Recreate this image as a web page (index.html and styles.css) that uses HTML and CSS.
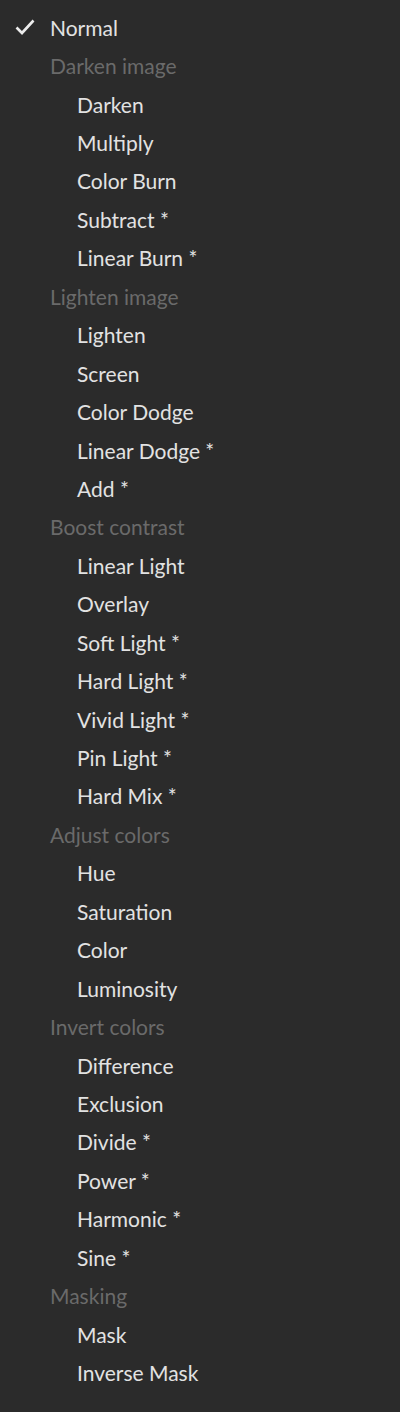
FILE: index.html
```html
<!DOCTYPE html>
<html>
<head>
<meta charset="utf-8">
<link rel="stylesheet" href="styles.css">
</head>
<body>
<ul class="menu">
  <li class="row selected"><svg class="check" viewBox="0 0 20 16" width="20" height="16"><path d="M1.5 8.5 L7 14 L18.5 1.5" fill="none" stroke="#ececec" stroke-width="2.6" stroke-linecap="butt" stroke-linejoin="miter"/></svg><span>Normal</span></li>
  <li class="row group">Darken image</li>
  <li class="row item">Darken</li>
  <li class="row item">Multiply</li>
  <li class="row item">Color Burn</li>
  <li class="row item">Subtract *</li>
  <li class="row item">Linear Burn *</li>
  <li class="row group">Lighten image</li>
  <li class="row item">Lighten</li>
  <li class="row item">Screen</li>
  <li class="row item">Color Dodge</li>
  <li class="row item">Linear Dodge *</li>
  <li class="row item">Add *</li>
  <li class="row group">Boost contrast</li>
  <li class="row item">Linear Light</li>
  <li class="row item">Overlay</li>
  <li class="row item">Soft Light *</li>
  <li class="row item">Hard Light *</li>
  <li class="row item">Vivid Light *</li>
  <li class="row item">Pin Light *</li>
  <li class="row item">Hard Mix *</li>
  <li class="row group">Adjust colors</li>
  <li class="row item">Hue</li>
  <li class="row item">Saturation</li>
  <li class="row item">Color</li>
  <li class="row item">Luminosity</li>
  <li class="row group">Invert colors</li>
  <li class="row item">Difference</li>
  <li class="row item">Exclusion</li>
  <li class="row item">Divide *</li>
  <li class="row item">Power *</li>
  <li class="row item">Harmonic *</li>
  <li class="row item">Sine *</li>
  <li class="row group">Masking</li>
  <li class="row item">Mask</li>
  <li class="row item">Inverse Mask</li>
</ul>
</body>
</html>
```
FILE: styles.css
```css
html, body {
  margin: 0;
  padding: 0;
  background: #2b2b2b;
}
body {
  font-family: "Lato", "Noto Sans", sans-serif;
  font-size: 21px;
  color: #e2e2e2;
}
.menu {
  list-style: none;
  margin: 0;
  padding: 8px 0 20px 0;
}
.row {
  height: 38.45px;
  display: flex;
  align-items: center;
  white-space: nowrap;
}
.selected {
  padding-left: 15px;
}
.selected .check {
  margin-right: 15px;
  flex: none;
}
.group {
  padding-left: 50px;
  color: #6a6a6a;
}
.item {
  padding-left: 77px;
}
```
